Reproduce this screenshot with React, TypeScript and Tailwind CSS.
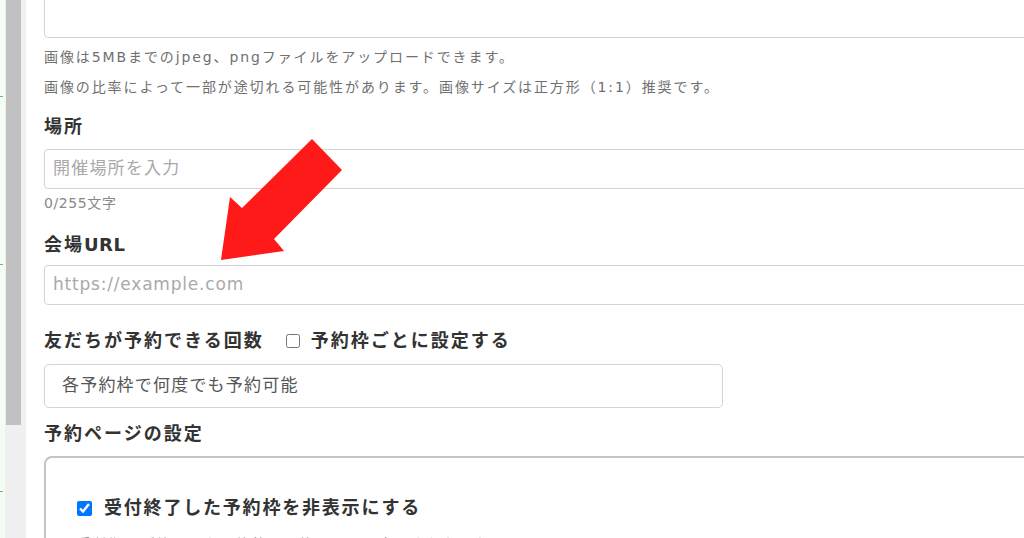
import React from "react";

const font = { fontFamily: '"DejaVu Sans", "Noto Sans CJK JP", sans-serif' };

function Label({ children }: { children: React.ReactNode }) {
  return <div className="text-[18px] font-bold tracking-[2px] text-[#333] leading-[24px]">{children}</div>;
}

function TextInput({ placeholder, tight }: { placeholder: string; tight?: boolean }) {
  return (
    <div
      className={
        "w-[1000px] h-[40px] border border-[#d4d4d4] rounded-[4px] flex items-center px-[8px] text-[17px] text-[#a9a9a9] " +
        (tight ? "tracking-[0.8px]" : "tracking-[1.2px]")
      }
    >
      {placeholder}
    </div>
  );
}

export default function App() {
  return (
    <div className="relative w-[1024px] h-[538px] overflow-hidden bg-white flex" style={font}>
      {/* left gutter + scrollbar */}
      <div className="w-[5px] h-full bg-[#f5fbf5] relative shrink-0">
        <div className="absolute left-0 top-[96px] w-[3px] h-px bg-[#5cc85c]" />
        <div className="absolute left-0 top-[264px] w-[3px] h-px bg-[#5cc85c]" />
        <div className="absolute left-0 top-[491px] w-[3px] h-px bg-[#5cc85c]" />
      </div>
      <div className="w-[21px] h-full bg-[#f0f0f0] shrink-0 pl-px">
        <div className="w-[15px] h-[425px] bg-[#c1c1c1]" />
      </div>

      <div className="flex-1 pl-[18px]">
        <div className="w-[1000px] h-[48px] -mt-[10px] border border-[#d4d4d4] rounded-[4px]" />
        <div className="mt-[4px] text-[14px] tracking-[1.9px] text-[#707070] leading-[30px]">
          <p>画像は5MBまでのjpeg、pngファイルをアップロードできます。</p>
          <p>画像の比率によって一部が途切れる可能性があります。画像サイズは正方形（1:1）推奨です。</p>
        </div>

        <div className="mt-[13px]"><Label>場所</Label></div>
        <div className="mt-[10px]"><TextInput placeholder="開催場所を入力" /></div>
        <div className="mt-[4px] text-[14px] tracking-[0.6px] text-[#888] leading-[20px]">0/255文字</div>

        <div className="mt-[20px]"><Label>会場<span className="tracking-[0.5px]">URL</span></Label></div>
        <div className="mt-[8px]"><TextInput placeholder="https://example.com" tight /></div>

        <div className="mt-[24px] flex items-center">
          <Label>友だちが予約できる回数</Label>
          <input type="checkbox" readOnly className="ml-[22px] w-[14px] h-[14px] accent-[#0075ff]" />
          <span className="ml-[11px] text-[18px] font-bold tracking-[2px] text-[#333] leading-[24px]">予約枠ごとに設定する</span>
        </div>

        <div className="mt-[11px] w-[679px] h-[44px] border border-[#d4d4d4] rounded-[5px] flex items-center pl-[17px] text-[17px] tracking-[1.2px] text-[#555]">
          各予約枠で何度でも予約可能
        </div>

        <div className="mt-[14px]"><Label>予約ページの設定</Label></div>

        <div className="mt-[10px] w-[1000px] h-[200px] border-2 border-[#c4c4c4] rounded-tl-[8px] pt-[38px] pl-[31px]">
          <div className="flex items-center">
            <input type="checkbox" checked readOnly className="w-[15px] h-[15px] accent-[#0075ff]" />
            <span className="ml-[12px] text-[18px] font-bold tracking-[1.8px] text-[#333] leading-[24px]">受付終了した予約枠を非表示にする</span>
          </div>
          <p className="mt-[14px] text-[14px] tracking-[1.9px] text-[#888]">受付期間が終了した予約枠は予約ページに表示されなくなります。</p>
        </div>
      </div>

      {/* red annotation arrow */}
      <svg className="absolute left-0 top-0 pointer-events-none" width="1024" height="538">
        <polygon points="312,139 342,170 274,239 284,251 221,260 230,197 242,208" fill="#ff1a1a" />
      </svg>
    </div>
  );
}
